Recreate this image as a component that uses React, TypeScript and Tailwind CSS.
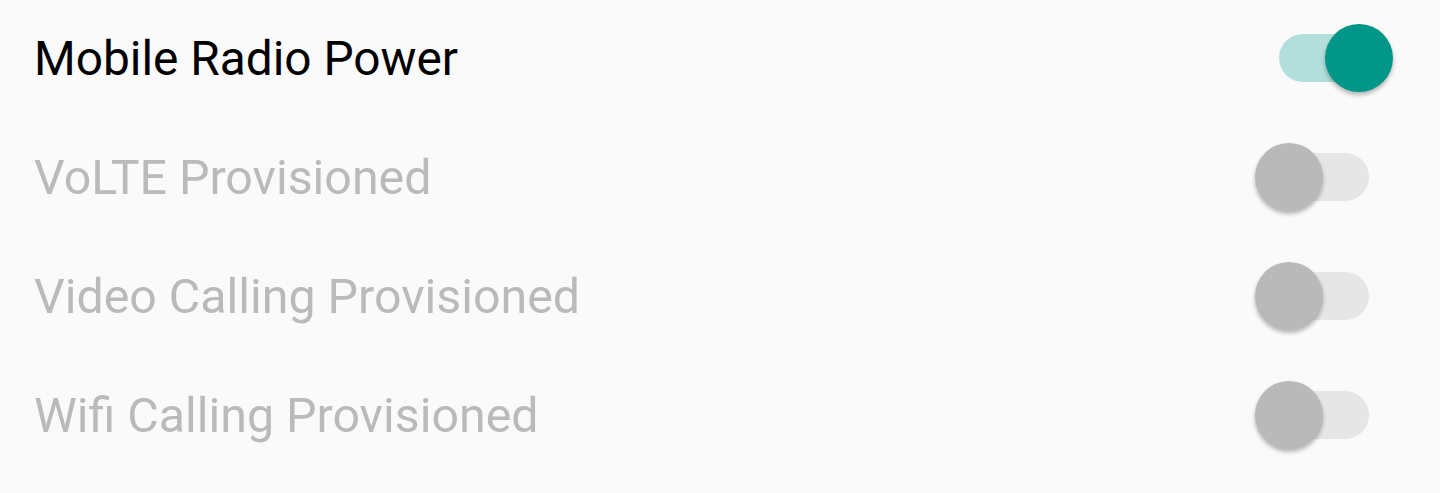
import React from "react";

function Switch({ on }: { on: boolean }) {
  return (
    <div className="relative w-[138px] h-[70px] mb-[3px]">
      <div
        className={
          "absolute left-[24px] top-[11px] w-[90px] h-[48px] rounded-full " +
          (on ? "bg-[#b2dfdb]" : "bg-[#e6e6e6]")
        }
      />
      <div
        className={
          "absolute top-[1px] w-[68px] h-[68px] rounded-full shadow-[0_3px_4px_rgba(0,0,0,0.28)] " +
          (on ? "left-[70px] bg-[#009688]" : "left-0 bg-[#b9b9b9]")
        }
      />
    </div>
  );
}

const rows = [
  { label: "Mobile Radio Power", on: true, disabled: false },
  { label: "VoLTE Provisioned", on: false, disabled: true },
  { label: "Video Calling Provisioned", on: false, disabled: true },
  { label: "Wifi Calling Provisioned", on: false, disabled: true },
];

export default function App() {
  return (
    <div className="w-[1440px] h-[493px] bg-[#fafafa] overflow-hidden" style={{ fontFamily: "Roboto, sans-serif" }}>
      {rows.map((r) => (
        <div key={r.label} className="h-[119px] flex items-center justify-between pl-[34px] pr-[47px]">
          <span
            className={
              "leading-none " +
              (r.disabled ? "text-[48.3px] text-[#bababa]" : "text-[47.8px] text-black")
            }
          >
            {r.label}
          </span>
          <Switch on={r.on} />
        </div>
      ))}
    </div>
  );
}
